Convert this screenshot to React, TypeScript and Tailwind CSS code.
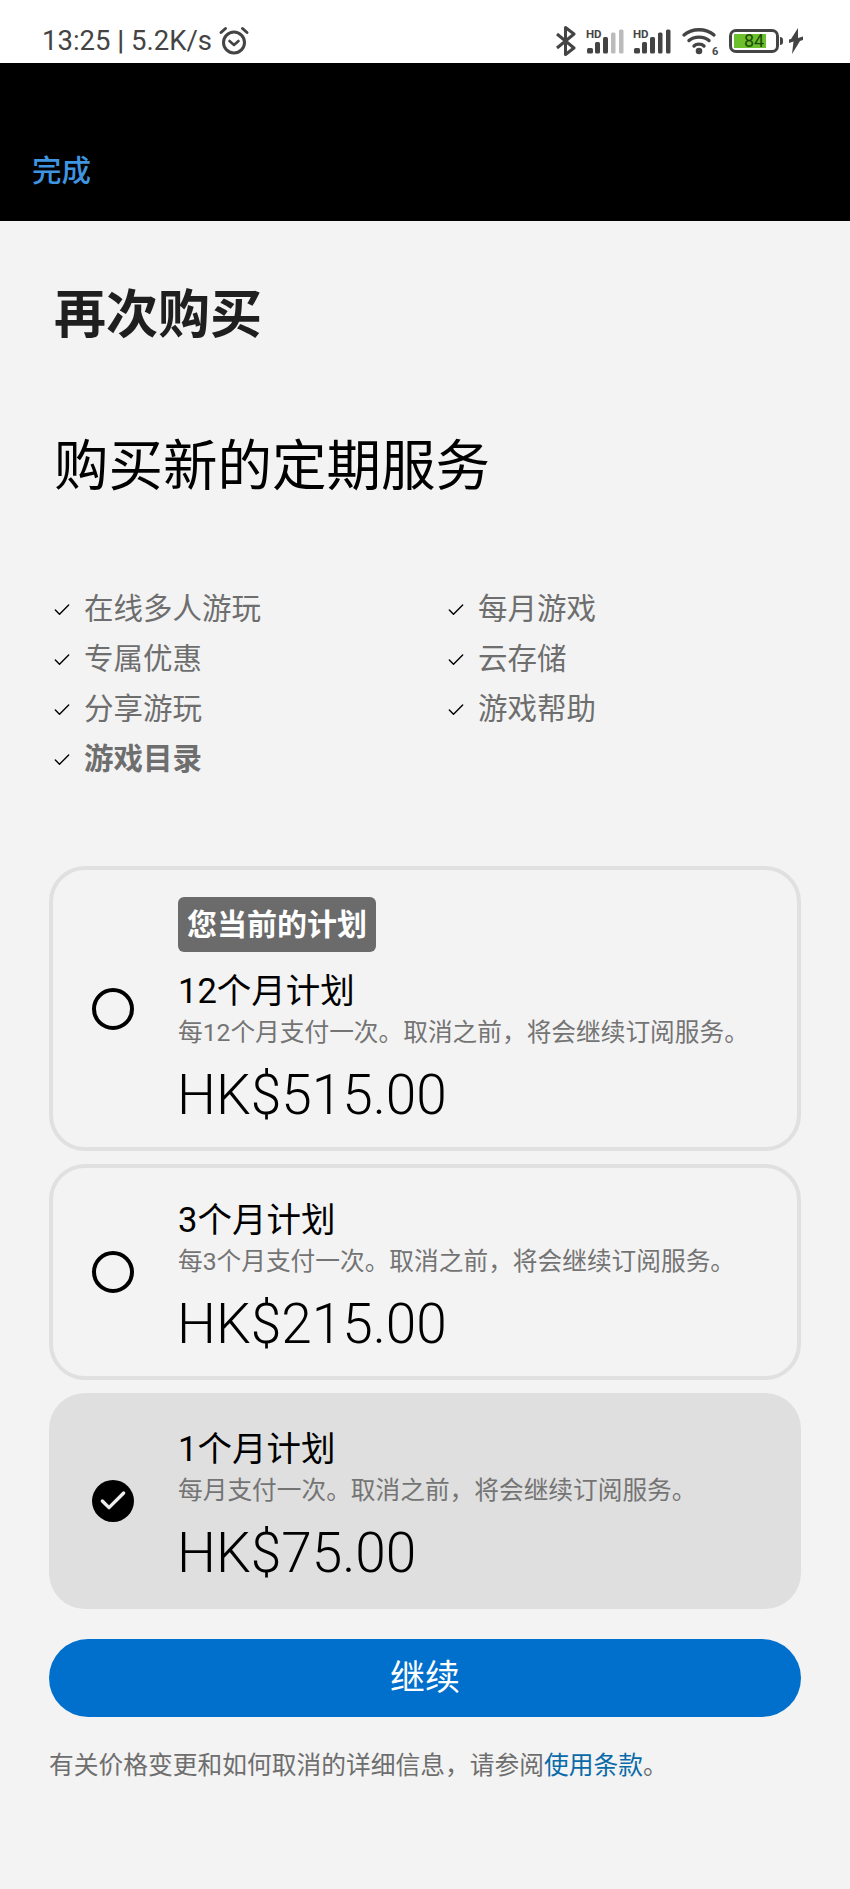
import { Check } from "lucide-react";

const features = [
  { text: "在线多人游玩" },
  { text: "每月游戏" },
  { text: "专属优惠" },
  { text: "云存储" },
  { text: "分享游玩" },
  { text: "游戏帮助" },
  { text: "游戏目录", bold: true },
];

const plans = [
  {
    title: "12个月计划",
    desc: "每12个月支付一次。取消之前，将会继续订阅服务。",
    price: "HK$515.00",
    current: true,
  },
  {
    title: "3个月计划",
    desc: "每3个月支付一次。取消之前，将会继续订阅服务。",
    price: "HK$215.00",
  },
  {
    title: "1个月计划",
    desc: "每月支付一次。取消之前，将会继续订阅服务。",
    price: "HK$75.00",
    selected: true,
  },
];

function Signal({ full }: { full: boolean }) {
  return (
    <svg width="38" height="30" viewBox="0 -2 38 30" fill="#444" className="overflow-visible">
      <text x="0" y="9.5" fontSize="11.5" fontWeight="700" fontFamily="Roboto, sans-serif">HD</text>
      <rect x="1" y="20" width="6" height="5.5" rx="1.5" />
      <rect x="9" y="14" width="5" height="11.5" rx="1.5" />
      <rect x="17" y="9" width="5" height="16.5" rx="1.5" />
      <rect x="25" y="4.5" width="4.5" height="21" rx="1.5" fill={full ? "#444" : "#bbb"} />
      <rect x="33" y="1.5" width="4.5" height="24" rx="1.5" fill={full ? "#444" : "#bbb"} />
    </svg>
  );
}

function StatusBar() {
  return (
    <div className="h-[63px] bg-white flex items-center justify-between pl-[42px] pr-[47px] pt-[18px] text-[#444]">
      <div className="flex items-center gap-[6px]">
        <span className="text-[27.5px] leading-none">13:25 <span className="font-bold">|</span> 5.2K/s</span>
        <svg width="32" height="30" viewBox="0 0 32 30" fill="none" stroke="#444" strokeLinecap="round" strokeLinejoin="round">
          <circle cx="16" cy="16.5" r="10.5" strokeWidth="3" />
          <path d="M11.5 15 L16 19 L20.5 15" strokeWidth="2.6" />
          <path d="M3 6.5 L7.5 2.5" strokeWidth="3" />
          <path d="M29 6.5 L24.5 2.5" strokeWidth="3" />
        </svg>
      </div>
      <div className="flex items-center">
        <svg width="22" height="30" viewBox="0 0 22 30" fill="none" stroke="#444" strokeWidth="3" className="mr-[9px]">
          <path d="M2 8 L19 22 L10.5 28.5 V1.5 L19 8 L2 22" strokeLinejoin="round" />
        </svg>
        <Signal full={false} />
        <div className="w-[9px]" />
        <Signal full={true} />
        <svg width="38" height="32" viewBox="0 -2 38 32" fill="none" stroke="#444" strokeWidth="3.4" strokeLinecap="round" className="ml-[11px] overflow-visible">
          <path d="M2 8 C 10 1, 24 1, 32 8" />
          <path d="M7 13.5 C 12 9, 22 9, 27 13.5" />
          <path d="M12 19 C 14.5 16.5, 19.5 16.5, 22 19" />
          <circle cx="17" cy="24" r="1.6" fill="#444" />
          <text x="30" y="27.5" fontSize="11" fontWeight="700" fill="#444" stroke="none" fontFamily="Roboto, sans-serif">6</text>
        </svg>
        <div className="ml-[9px] relative w-[50px] h-[24px] border-[3px] border-[#444] rounded-[7px] p-[2px]">
          <div className="h-full w-[80%] bg-[#6cc02c]" />
          <span className="absolute inset-0 flex items-center justify-center text-[18px] leading-none text-[#1c4a08]">84</span>
        </div>
        <div className="ml-[1px] w-[3px] h-[8px] bg-[#444] rounded-r-sm" />
        <svg width="14" height="26" viewBox="0 0 14 26" fill="#444" className="ml-[6px]">
          <path d="M9 0 L2 11 L0 11.5 L0 15 L4.5 13.5 L3 26 L11 13 L14 12 L14 8.5 L9 10 Z" />
        </svg>
      </div>
    </div>
  );
}

export default function App() {
  return (
    <div className="w-[850px] h-[1889px] bg-[#f3f3f3] overflow-hidden font-['Roboto','Noto_Sans_CJK_SC',sans-serif]">
      <StatusBar />

      <div className="h-[158px] bg-black flex items-end pl-[32px] pb-[30px]">
        <span className="text-[29.5px] leading-[40px] font-medium text-[#3f95e0]">完成</span>
      </div>

      <div className="px-[54px] pt-[62px]">
        <h1 className="text-[52px] leading-[66px] font-bold text-[#1f1f1f]">再次购买</h1>
        <h2 className="mt-[84px] text-[54.5px] leading-[66px] font-normal text-black">购买新的定期服务</h2>

        <div className="mt-[85px] grid grid-cols-[394px_1fr]">
          {features.map((f) => (
            <div key={f.text} className="h-[50px] flex items-center gap-[12px]">
              <Check size={20} strokeWidth={1.7} className="-ml-[2px] text-black mt-[2px]" />
              <span className={`text-[29.5px] leading-[40px] text-[#6e6e6e] ${f.bold ? "font-bold" : ""}`}>{f.text}</span>
            </div>
          ))}
        </div>
      </div>

      <div className="mt-[82px] px-[49px] flex flex-col gap-[13px]">
        {plans.map((p) => (
          <div
            key={p.title}
            className={`flex items-center rounded-[36px] ${
              p.selected ? "bg-[#dfdfdf] pl-[43px]" : "border-[4px] border-[#e0e0e0] pl-[39px]"
            }`}
          >
            {p.selected ? (
              <div className="w-[42px] h-[42px] shrink-0 rounded-full bg-black flex items-center justify-center">
                <Check size={32} strokeWidth={2.5} className="text-[#eeeeee]" />
              </div>
            ) : (
              <div className="w-[42px] h-[42px] shrink-0 rounded-full border-[4px] border-black" />
            )}
            <div
              className={`ml-[44px] flex flex-col ${
                p.selected ? "pt-[34px] pb-[23px]" : p.current ? "pt-[27px] pb-[19px]" : "pt-[30px] pb-[19px]"
              }`}
            >
              {p.current && (
                <span className="mb-[17px] self-start rounded-[6px] bg-[#6b6b6b] px-[9px] h-[55px] flex items-center text-[30px] font-bold text-white">
                  您当前的计划
                </span>
              )}
              <span className="text-[34.5px] leading-[44px] text-black">{p.title}</span>
              <span className="mt-[4px] text-[24.7px] leading-[32px] text-[#747474]">{p.desc}</span>
              <span className="mt-[13px] -ml-[1px] text-[55px] leading-[66px] font-light text-black">{p.price}</span>
            </div>
          </div>
        ))}
      </div>

      <div className="mt-[30px] mx-[49px] h-[78px] pt-[3px] rounded-full bg-[#0070cc] flex items-center justify-center text-[35px] text-white">
        继续
      </div>

      <p className="mt-[31px] px-[49px] text-[24.75px] leading-[36px] text-[#6e6e6e]">
        有关价格变更和如何取消的详细信息，请参阅<span className="text-[#0a6aa8]">使用条款</span>。
      </p>
    </div>
  );
}
